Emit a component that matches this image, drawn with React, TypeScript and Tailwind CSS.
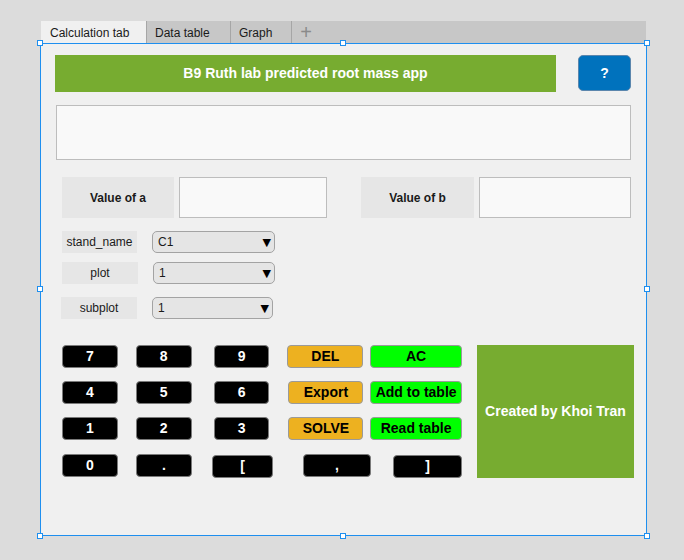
import React from "react";

const font = { fontFamily: '"Liberation Sans", Arial, sans-serif' };

function Handle({ cls }: { cls: string }) {
  return <div className={`absolute w-[6px] h-[6px] bg-white border border-[#1e8fef] ${cls}`} />;
}

function Key({ label, w, cls = "" }: { label: string; w: string; cls?: string }) {
  return (
    <div
      className={`${w} h-[23px] bg-black border border-[#7a7a7a] rounded-[4px] flex items-center justify-center text-white font-bold text-[14px] ${cls}`}
    >
      {label}
    </div>
  );
}

function Btn({ label, w, color, cls = "" }: { label: string; w: string; color: string; cls?: string }) {
  return (
    <div
      className={`${w} h-[23px] ${color} border border-[#9a9a9a] rounded-[4px] flex items-center justify-center text-black font-bold text-[14px] ${cls}`}
    >
      {label}
    </div>
  );
}

function Select({ value, w, cls = "" }: { value: string; w: string; cls?: string }) {
  return (
    <div
      className={`${w} h-[22px] bg-[#e5e5e5] border border-[#a3a3a3] rounded-[5px] flex items-center pl-[5px] pr-[3px] text-[12px] text-[#1a1a1a] ${cls}`}
    >
      <span className="flex-1">{value}</span>
      <span className="text-[11px] leading-none text-black pt-[1px]" style={{ fontFamily: '"DejaVu Sans", sans-serif' }}>▼</span>
    </div>
  );
}

function SmallLabel({ text, w, cls = "" }: { text: string; w: string; cls?: string }) {
  return (
    <div className={`${w} h-[22px] bg-[#e6e6e6] flex items-center justify-center text-[12px] text-[#1a1a1a] ${cls}`}>
      {text}
    </div>
  );
}

export default function App() {
  return (
    <div className="w-[684px] h-[560px] bg-[#dcdcdc] pt-[21px] pl-[40px]" style={font}>
      {/* tab bar */}
      <div className="ml-[1px] w-[605px] h-[22px] bg-[#c7c7c7] flex items-stretch text-[12px] text-[#1a1a1a]">
        <div className="w-[106px] bg-[#f0f0f0] flex items-center pl-[9px] pt-[1px] border-r border-[#a6a6a6]">Calculation tab</div>
        <div className="w-[84px] flex items-center pl-[8px] pt-[1px] border-r border-[#a6a6a6]">Data table</div>
        <div className="w-[61px] flex items-center pl-[8px] pt-[1px] border-r border-[#a6a6a6]">Graph</div>
        <div className="w-[28px] flex items-center justify-center text-[20px] leading-none text-[#8a8a8a]">+</div>
      </div>

      {/* panel */}
      <div className="relative w-[607px] h-[493px] border border-[#1e8fef] bg-[#f0f0f0]">
        <Handle cls="-left-[4px] -top-[4px]" />
        <Handle cls="left-[299px] -top-[4px]" />
        <Handle cls="-right-[4px] -top-[4px]" />
        <Handle cls="-left-[4px] top-[242px]" />
        <Handle cls="-right-[4px] top-[242px]" />
        <Handle cls="-left-[4px] -bottom-[4px]" />
        <Handle cls="left-[299px] -bottom-[4px]" />
        <Handle cls="-right-[4px] -bottom-[4px]" />

        {/* title row */}
        <div className="flex mt-[11px] ml-[14px]">
          <div className="w-[501px] h-[37px] bg-[#77ac30] flex items-center justify-center text-white font-bold text-[14px]">
            B9 Ruth lab predicted root mass app
          </div>
          <div className="ml-[22px] w-[53px] h-[36px] bg-[#0072bd] border border-[#5b86ad] rounded-[5px] flex items-center justify-center text-white font-bold text-[14px]">
            ?
          </div>
        </div>

        {/* text area */}
        <div className="mt-[13px] ml-[15px] w-[575px] h-[55px] bg-[#f9f9f9] border border-[#bdbdbd]" />

        {/* value of a / b */}
        <div className="mt-[17px] ml-[21px] flex">
          <div className="w-[112px] h-[41px] bg-[#e6e6e6] flex items-center justify-center text-[12px] font-bold text-[#1a1a1a]">
            Value of a
          </div>
          <div className="ml-[5px] w-[148px] h-[41px] bg-[#f9f9f9] border border-[#bdbdbd]" />
          <div className="ml-[34px] w-[113px] h-[41px] bg-[#e6e6e6] flex items-center justify-center text-[12px] font-bold text-[#1a1a1a]">
            Value of b
          </div>
          <div className="ml-[5px] w-[152px] h-[41px] bg-[#f9f9f9] border border-[#bdbdbd]" />
        </div>

        {/* dropdowns */}
        <div className="mt-[13px] ml-[21px] flex">
          <SmallLabel text="stand_name" w="w-[75px]" />
          <Select value="C1" w="w-[123px]" cls="ml-[15px]" />
        </div>
        <div className="mt-[9px] ml-[21px] flex">
          <SmallLabel text="plot" w="w-[76px]" />
          <Select value="1" w="w-[122px]" cls="ml-[15px]" />
        </div>
        <div className="mt-[13px] ml-[20px] flex">
          <SmallLabel text="subplot" w="w-[76px]" />
          <Select value="1" w="w-[121px]" cls="ml-[15px]" />
        </div>

        {/* keypad + credit */}
        <div className="mt-[26px] ml-[21px] flex items-start">
          <div className="w-[400px] flex flex-col">
            <div className="flex">
              <Key label="7" w="w-[56px]" />
              <Key label="8" w="w-[56px]" cls="ml-[18px]" />
              <Key label="9" w="w-[56px]" cls="ml-[22px]" />
              <Btn label="DEL" w="w-[76px]" color="bg-[#edb120]" cls="ml-[18px]" />
              <Btn label="AC" w="w-[92px]" color="bg-[#00ff00]" cls="ml-[7px]" />
            </div>
            <div className="flex mt-[13px]">
              <Key label="4" w="w-[56px]" />
              <Key label="5" w="w-[56px]" cls="ml-[18px]" />
              <Key label="6" w="w-[56px]" cls="ml-[22px]" />
              <Btn label="Export" w="w-[75px]" color="bg-[#edb120]" cls="ml-[19px]" />
              <Btn label="Add to table" w="w-[92px]" color="bg-[#00ff00]" cls="ml-[7px]" />
            </div>
            <div className="flex mt-[13px]">
              <Key label="1" w="w-[56px]" />
              <Key label="2" w="w-[56px]" cls="ml-[18px]" />
              <Key label="3" w="w-[56px]" cls="ml-[22px]" />
              <Btn label="SOLVE" w="w-[75px]" color="bg-[#edb120]" cls="ml-[19px]" />
              <Btn label="Read table" w="w-[92px]" color="bg-[#00ff00]" cls="ml-[7px]" />
            </div>
            <div className="flex mt-[14px] items-start">
              <Key label="0" w="w-[56px]" />
              <Key label="." w="w-[56px]" cls="ml-[18px]" />
              <Key label="[" w="w-[61px]" cls="ml-[20px] mt-[1px]" />
              <Key label="," w="w-[68px]" cls="ml-[30px]" />
              <Key label="]" w="w-[69px]" cls="ml-[22px] mt-[1px]" />
            </div>
          </div>
          <div className="ml-[15px] w-[157px] h-[133px] bg-[#77ac30] flex items-center justify-center text-white font-bold text-[14px]">
            Created by Khoi Tran
          </div>
        </div>
      </div>
    </div>
  );
}
